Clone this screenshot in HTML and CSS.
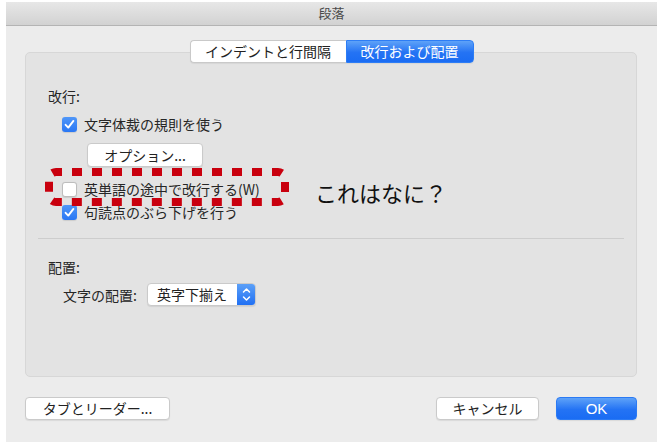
FILE: index.html
```html
<!DOCTYPE html>
<html lang="ja">
<head>
<meta charset="utf-8">
<link rel="stylesheet" href="styles.css">
</head>
<body>
<div class="window">
  <div class="titlebar">段落</div>
  <div class="content">
    <div class="tabs">
      <div class="tab">インデントと行間隔</div>
      <div class="tab active">改行および配置</div>
    </div>
    <div class="panel">
      <div class="section-label">改行:</div>
      <div class="check-row first">
        <span class="box checked"><svg viewBox="0 0 15 15" width="15" height="15"><path d="M3.6 7.8 L6.3 10.6 L11.4 3.9" fill="none" stroke="#fff" stroke-width="1.9" stroke-linecap="round" stroke-linejoin="round"/></svg></span>
        <span>文字体裁の規則を使う</span>
      </div>
      <div class="btn options">オプション...</div>
      <div class="check-row second">
        <span class="box"></span>
        <span>英単語の途中で改行する(W)</span>
      </div>
      <div class="check-row third">
        <span class="box checked"><svg viewBox="0 0 15 15" width="15" height="15"><path d="M3.6 7.8 L6.3 10.6 L11.4 3.9" fill="none" stroke="#fff" stroke-width="1.9" stroke-linecap="round" stroke-linejoin="round"/></svg></span>
        <span>句読点のぶら下げを行う</span>
      </div>
      <div class="separator"></div>
      <div class="section-label second-label">配置:</div>
      <div class="align-row">
        <span class="align-label">文字の配置:</span>
        <div class="popup">
          <span class="popup-text">英字下揃え</span>
          <span class="popup-arrows"><svg viewBox="0 0 19 23" width="19" height="23"><path d="M6.5 9 L9.5 6 L12.5 9 M6.5 14 L9.5 17 L12.5 14" fill="none" stroke="#fff" stroke-width="1.5" stroke-linecap="round" stroke-linejoin="round"/></svg></span>
        </div>
      </div>
    </div>
    <div class="footer">
      <div class="btn tabs-btn">タブとリーダー...</div>
      <div class="spacer"></div>
      <div class="btn cancel">キャンセル</div>
      <div class="btn ok">OK</div>
    </div>
  </div>
  <svg class="annot-box" width="252" height="46" viewBox="0 0 252 46"><rect x="4" y="4" width="236" height="30" rx="7" ry="7" fill="none" stroke="#c9000e" stroke-width="8" stroke-dasharray="10 10" stroke-dashoffset="4"/></svg>
  <div class="annot-text">これはなに？</div>
</div>
</body>
</html>
```
FILE: styles.css
```css
* { box-sizing: border-box; }
html, body { margin: 0; padding: 0; background: #ffffff; }
body {
  font-family: "Noto Sans CJK JP", "Noto Sans", sans-serif;
  font-size: 14px;
  color: #262626;
}
.window {
  position: relative;
  margin: 2px 0 0 6px;
  width: 651px;
  height: 440px;
  background: #ececec;
  display: flex;
  flex-direction: column;
}
.titlebar {
  height: 24px;
  background: linear-gradient(#e7e7e7, #d2d2d2);
  border-bottom: 1px solid #b4b4b4;
  text-align: center;
  line-height: 22px;
  font-size: 13px;
  color: #4a4a4a;
}
.content {
  padding: 14px 20px 0 19px;
  display: flex;
  flex-direction: column;
}
.tabs {
  position: relative;
  z-index: 1;
  display: flex;
  justify-content: center;
  height: 23px;
  margin-left: 1px;
}
.tab {
  height: 23px;
  line-height: 21px;
  padding: 0;
  text-align: center;
  background: #ffffff;
  border: 1px solid #c9c9c9;
  border-right: none;
  border-radius: 4px 0 0 4px;
  box-shadow: 0 1px 1px rgba(0,0,0,0.06);
  width: 156px;
  color: #222;
}
.tab.active {
  width: 128px;
  border: 1px solid #2d7df5;
  border-radius: 0 4px 4px 0;
  background: linear-gradient(#5ea2f8, #2473f4 55%, #1a6cf3);
  color: #ffffff;
}
.panel {
  margin-top: -11px;
  height: 325px;
  background: #e3e3e3;
  border: 1px solid #d7d7d7;
  border-radius: 5px;
  padding: 33px 12px 0 22px;
  display: flex;
  flex-direction: column;
}
.section-label {
  height: 20px;
  line-height: 20px;
}
.second-label { margin-top: 18px; }
.check-row {
  display: flex;
  align-items: center;
  height: 20px;
  margin-left: 14px;
  gap: 7px;
}
.check-row.first { margin-top: 8px; }
.check-row.second { margin-top: 12px; }
.check-row.third { margin-top: 3px; }
.box {
  width: 15px;
  height: 15px;
  border-radius: 3px;
  background: #ffffff;
  border: 1px solid #bdbdbd;
  box-shadow: 0 0.5px 1px rgba(0,0,0,0.1);
  display: flex;
}
.box.checked {
  background: linear-gradient(#4f96f8, #2a77f4);
  border: none;
}
.btn {
  height: 23px;
  line-height: 21px;
  text-align: center;
  background: #ffffff;
  border: 1px solid #cacaca;
  border-radius: 4px;
  box-shadow: 0 1px 1px rgba(0,0,0,0.08);
  color: #222;
}
.options {
  margin-top: 9px;
  margin-left: 39px;
  width: 116px;
  height: 24px;
  line-height: 22px;
}
.separator {
  margin: 16px 0 0 -10px;
  height: 1px;
  background: #cdcdcd;
}
.align-row {
  margin-top: 6px;
  margin-left: 15px;
  display: flex;
  align-items: center;
  height: 23px;
  gap: 10px;
}
.popup {
  width: 109px;
  height: 23px;
  display: flex;
  background: #ffffff;
  border: 1px solid #cacaca;
  border-radius: 4px;
  box-shadow: 0 1px 1px rgba(0,0,0,0.08);
  overflow: hidden;
}
.popup-text {
  flex: 1;
  line-height: 21px;
  padding-left: 9px;
  color: #222;
}
.popup-arrows {
  width: 19px;
  margin: -1px -1px -1px 0;
  background: linear-gradient(#5ea2f8, #1e6ef3);
  display: flex;
}
.footer {
  margin-top: 20px;
  display: flex;
  height: 23px;
}
.tabs-btn { width: 145px; margin-left: 0; }
.spacer { flex: 1; }
.cancel { width: 103px; margin-right: 17px; }
.ok {
  width: 81px;
  border: 1px solid #2b7af4;
  background: linear-gradient(#5ea2f8, #2473f4 55%, #1a6cf3);
  color: #ffffff;
  font-family: "Liberation Sans", "Noto Sans", sans-serif;
  font-size: 15px;
}
.annot-box {
  position: absolute;
  left: 39px;
  top: 166px;
}
.annot-text {
  position: absolute;
  left: 309px;
  top: 175px;
  font-size: 22px;
  line-height: 30px;
  color: #111111;
}
```
